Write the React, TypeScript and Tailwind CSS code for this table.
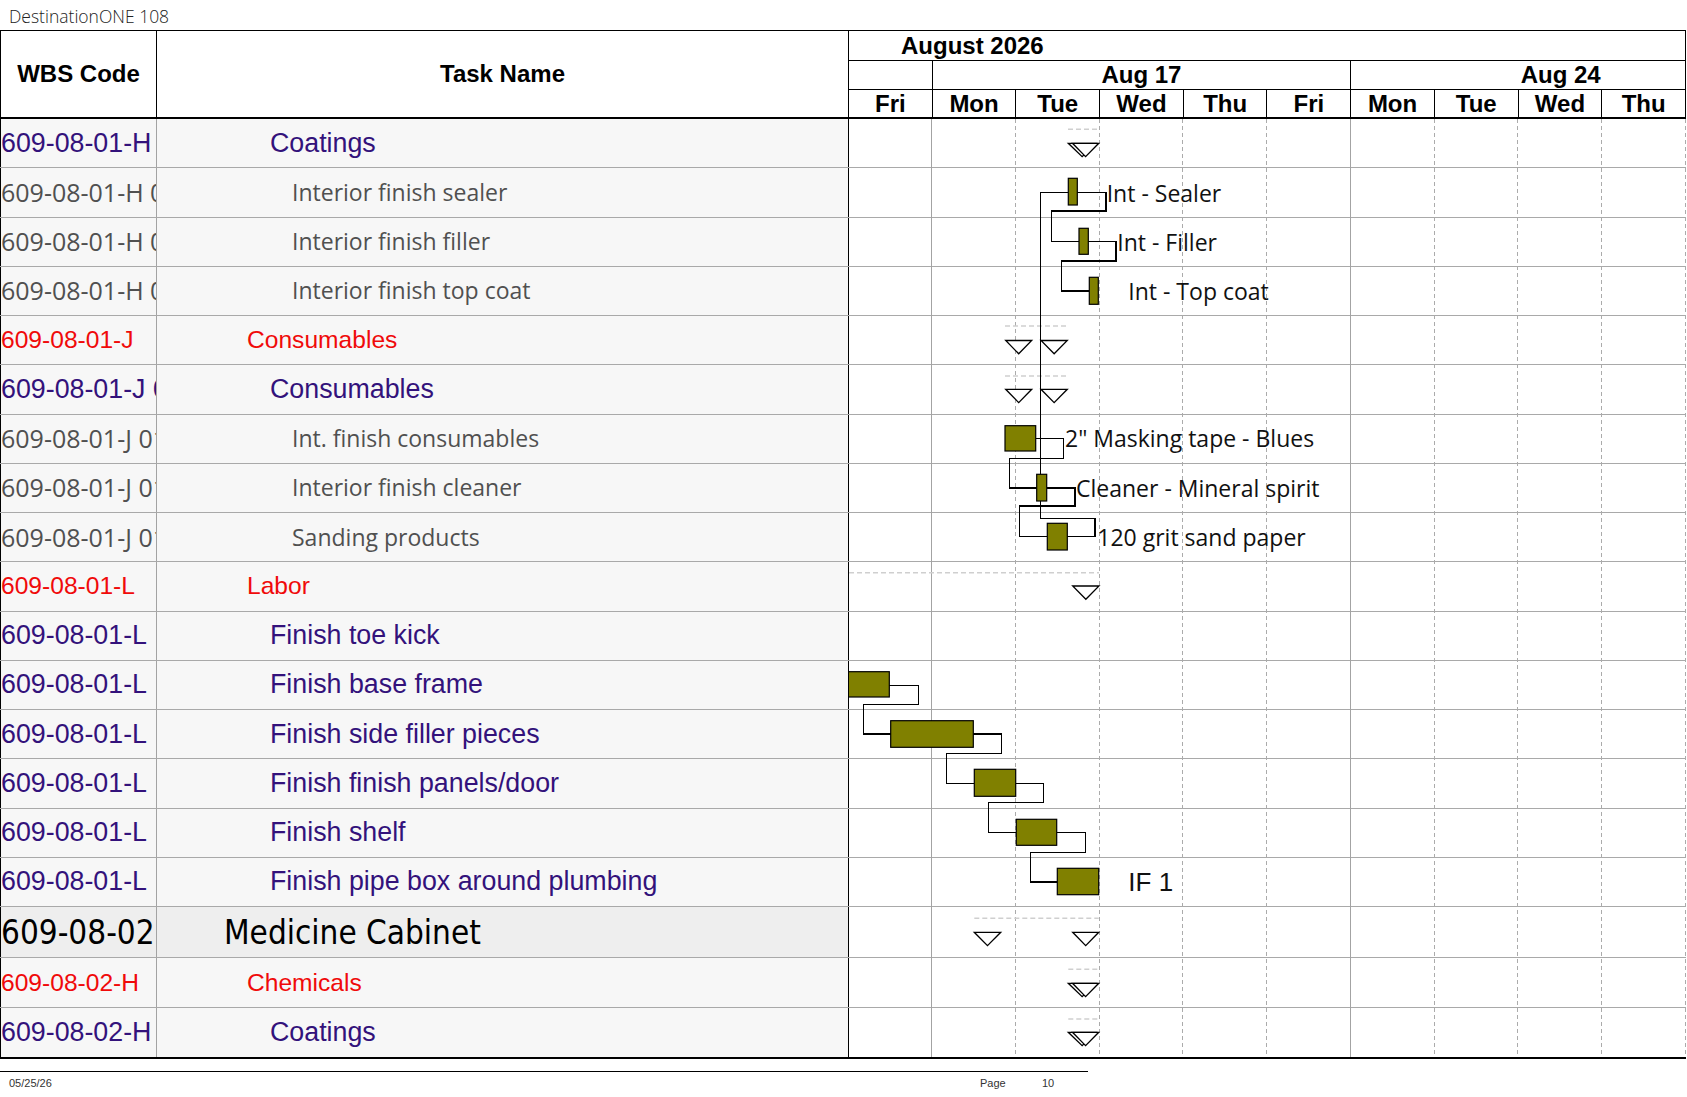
import React from 'react';

type Kind = 'purple' | 'red' | 'grey' | 'top';

interface Row {
  wbs: string;
  name: string;
  kind: Kind;
  h: string;
}

const arial = "font-['Liberation_Sans',Arial,sans-serif]";

const wbsStyle: Record<Kind, string> = {
  purple: "font-['Liberation_Sans',Arial,sans-serif] text-[26.8px] text-[#33127b]",
  red: "font-['Liberation_Sans',Arial,sans-serif] text-[24.6px] text-[#f00a0a]",
  grey: "font-['Open_Sans',sans-serif] text-[25px] text-[#505050]",
  top: "font-['DejaVu_Sans_Condensed','Liberation_Sans',sans-serif] text-[33px] text-black",
};

const nameStyle: Record<Kind, string> = {
  purple: "font-['Liberation_Sans',Arial,sans-serif] text-[26.8px] text-[#33127b] pl-[113px]",
  red: "font-['Liberation_Sans',Arial,sans-serif] text-[24.6px] text-[#f00a0a] pl-[90px]",
  grey: "font-['Open_Sans',sans-serif] text-[23px] text-[#505050] pl-[135px]",
  top: "font-['DejaVu_Sans_Condensed','Liberation_Sans',sans-serif] text-[33px] text-black pl-[67px]",
};

const rows: Row[] = [
  { wbs: '609-08-01-H', name: 'Coatings', kind: 'purple', h: 'h-[49.25px]' },
  { wbs: '609-08-01-H 01', name: 'Interior finish sealer', kind: 'grey', h: 'h-[49.25px]' },
  { wbs: '609-08-01-H 02', name: 'Interior finish filler', kind: 'grey', h: 'h-[49.25px]' },
  { wbs: '609-08-01-H 03', name: 'Interior finish top coat', kind: 'grey', h: 'h-[49.25px]' },
  { wbs: '609-08-01-J', name: 'Consumables', kind: 'red', h: 'h-[49.25px]' },
  { wbs: '609-08-01-J 01', name: 'Consumables', kind: 'purple', h: 'h-[49.25px]' },
  { wbs: '609-08-01-J 01.01', name: 'Int. finish consumables', kind: 'grey', h: 'h-[49.25px]' },
  { wbs: '609-08-01-J 01.02', name: 'Interior finish cleaner', kind: 'grey', h: 'h-[49.25px]' },
  { wbs: '609-08-01-J 01.03', name: 'Sanding products', kind: 'grey', h: 'h-[49.25px]' },
  { wbs: '609-08-01-L', name: 'Labor', kind: 'red', h: 'h-[49.25px]' },
  { wbs: '609-08-01-L', name: 'Finish toe kick', kind: 'purple', h: 'h-[49.25px]' },
  { wbs: '609-08-01-L', name: 'Finish base frame', kind: 'purple', h: 'h-[49.25px]' },
  { wbs: '609-08-01-L', name: 'Finish side filler pieces', kind: 'purple', h: 'h-[49.25px]' },
  { wbs: '609-08-01-L', name: 'Finish finish panels/door', kind: 'purple', h: 'h-[49.25px]' },
  { wbs: '609-08-01-L', name: 'Finish shelf', kind: 'purple', h: 'h-[49.25px]' },
  { wbs: '609-08-01-L', name: 'Finish pipe box around plumbing', kind: 'purple', h: 'h-[49.25px]' },
  { wbs: '609-08-02', name: 'Medicine Cabinet', kind: 'top', h: 'h-[51.4px]' },
  { wbs: '609-08-02-H', name: 'Chemicals', kind: 'red', h: 'h-[50px]' },
  { wbs: '609-08-02-H', name: 'Coatings', kind: 'purple', h: 'h-[48.6px]' },
];

const days = ['Fri', 'Mon', 'Tue', 'Wed', 'Thu', 'Fri', 'Mon', 'Tue', 'Wed', 'Thu'];
const DAY = 83.74;

// bars in page coordinates
const bars = [
  [1068.3, 1077.3, 178.3, 205],
  [1079, 1088.3, 228.3, 254.3],
  [1089.3, 1098.3, 277.3, 304.3],
  [1005, 1035.7, 425.7, 451],
  [1036.7, 1046.7, 474.3, 501],
  [1047.3, 1067.3, 523.3, 550],
  [848.3, 889.3, 671.7, 697],
  [890.7, 973.3, 720.7, 747.3],
  [974.3, 1015.7, 769.3, 796.3],
  [1016.3, 1056.7, 819.3, 845.3],
  [1057.3, 1098.7, 868.3, 894.7],
];

const links: number[][] = [
  [1077.3, 192.3, 1106, 192.3, 1106, 211, 1051.3, 211, 1051.3, 241.5, 1079, 241.5],
  [1088.3, 241.5, 1116, 241.5, 1116, 261, 1061.7, 261, 1061.7, 291, 1089.3, 291],
  [1035.7, 438.3, 1063.3, 438.3, 1063.3, 458.3, 1009.3, 458.3, 1009.3, 488, 1036.7, 488],
  [1046.7, 488, 1075, 488, 1075, 506, 1019.3, 506, 1019.3, 536.7, 1047.3, 536.7],
  [1067.3, 536.7, 1095, 536.7, 1095, 518.3, 1040.5, 518.3, 1040.5, 192.3, 1068.3, 192.3],
  [889.3, 685.3, 918.3, 685.3, 918.3, 704.3, 863.3, 704.3, 863.3, 734, 890.7, 734],
  [973.3, 734, 1001.3, 734, 1001.3, 753.3, 946.7, 753.3, 946.7, 783.3, 974.3, 783.3],
  [1015.7, 783.3, 1043.7, 783.3, 1043.7, 802.3, 988.3, 802.3, 988.3, 832.3, 1016.3, 832.3],
  [1056.7, 832.3, 1085.7, 832.3, 1085.7, 852.3, 1030.3, 852.3, 1030.3, 882, 1057.3, 882],
];

// summary rows: dashed line + triangles (left, right, top)
const summaries: { dash: [number, number, number]; tris: [number, number, number][] }[] = [
  { dash: [1068, 1099, 129.3], tris: [[1068.3, 1096, 143.3], [1072.5, 1098.7, 143.3]] },
  { dash: [1005, 1068, 326], tris: [[1005.7, 1031.7, 340.5], [1041, 1067.3, 340.5]] },
  { dash: [1005, 1068, 376], tris: [[1005.7, 1031.7, 389.3], [1041, 1067.3, 389.3]] },
  { dash: [849, 1099, 572.7], tris: [[1072.7, 1099, 586]] },
  { dash: [974.3, 1098.7, 918.3], tris: [[974.3, 1000.7, 932.3], [1072.7, 1098.7, 932.3]] },
  { dash: [1068.3, 1098.7, 969.3], tris: [[1068.3, 1096, 983.3], [1072.5, 1098.7, 983.3]] },
  { dash: [1068.3, 1098.7, 1019], tris: [[1068.3, 1096, 1032.3], [1072.5, 1098.7, 1032.3]] },
];

const labels = [
  { x: 1106.7, y: 202.3, text: 'Int - Sealer' },
  { x: 1117.3, y: 251.2, text: 'Int - Filler' },
  { x: 1128.3, y: 300.3, text: 'Int - Top coat' },
  { x: 1065, y: 447.3, text: '2" Masking tape - Blues' },
  { x: 1076, y: 496.7, text: 'Cleaner - Mineral spirit' },
  { x: 1097.3, y: 545.7, text: '120 grit sand paper' },
];

const triPoints = (l: number, r: number, t: number) =>
  `${l},${t} ${r},${t} ${(l + r) / 2},${t + 13.3}`;

const GanttDrawing: React.FC = () => (
  <svg
    className="absolute left-[849px] top-0 pointer-events-none"
    width={837}
    height={938}
    viewBox="849 119 837 938"
  >
    {Array.from({ length: 10 }, (_, i) => {
      const x = 848 + DAY * (i + 1);
      const solid = i === 0 || i === 5;
      return (
        <line
          key={i}
          x1={x}
          x2={x}
          y1={119}
          y2={1057}
          stroke={solid ? '#a3a3a3' : '#ababab'}
          strokeWidth={1}
          strokeDasharray={solid ? undefined : '4 3'}
          shapeRendering="crispEdges"
        />
      );
    })}

    {summaries.map((s, i) => (
      <g key={i}>
        <line
          x1={s.dash[0]}
          x2={s.dash[1]}
          y1={s.dash[2]}
          y2={s.dash[2]}
          stroke="#cfcfcf"
          strokeWidth={1.6}
          strokeDasharray="5 3"
        />
        {s.tris.map((t, j) => (
          <polygon key={j} points={triPoints(t[0], t[1], t[2])} fill="white" stroke="#000" strokeWidth={1.3} />
        ))}
      </g>
    ))}

    {links.map((p, i) => (
      <polyline
        key={i}
        points={p.join(' ')}
        fill="none"
        stroke="#000"
        strokeWidth={1.2}
        shapeRendering="crispEdges"
      />
    ))}

    {bars.map(([x1, x2, y1, y2], i) => (
      <rect
        key={i}
        x={x1}
        y={y1}
        width={x2 - x1}
        height={y2 - y1}
        fill="#808000"
        stroke="#000"
        strokeWidth={1.2}
      />
    ))}

    {labels.map((l) => (
      <text key={l.text} x={l.x} y={l.y} fontFamily="Open Sans, sans-serif" fontSize={23} fill="#111">
        {l.text}
      </text>
    ))}
    <text x={1128.3} y={891} fontFamily="Liberation Sans, Arial, sans-serif" fontSize={26} fill="#111">
      IF 1
    </text>
  </svg>
);

export default function App() {
  return (
    <div className="w-[1687px] bg-white text-black">
      {/* Title */}
      <div className="h-[30px] flex items-center pl-[9px] pt-[2px] font-['Open_Sans',sans-serif] font-light text-[17.5px] text-[#222]">
        DestinationONE 108
      </div>

      {/* Header */}
      <div className={`w-[1686px] h-[89px] flex border-t border-b-2 border-black ${arial} font-bold text-[24px] leading-none`}>
        <div className="w-[157px] shrink-0 border-l border-r border-black flex items-center justify-center">
          WBS Code
        </div>
        <div className="w-[692px] shrink-0 border-r border-black flex items-center justify-center">
          Task Name
        </div>
        <div className="flex-1 flex flex-col">
          <div className="h-[30px] border-b border-r border-black flex items-center pl-[52px]">
            August 2026
          </div>
          <div className="h-[29px] border-b border-black grid grid-cols-10">
            <div className="col-span-1 border-r border-black" />
            <div className="col-span-5 border-r border-black flex items-center justify-center">Aug 17</div>
            <div className="col-span-4 border-r border-black overflow-hidden flex items-center">
              <div className="w-[419px] shrink-0 text-center">Aug 24</div>
            </div>
          </div>
          <div className="flex-1 grid grid-cols-10">
            {days.map((d, i) => (
              <div key={i} className="border-r border-black flex items-center justify-center">
                {d}
              </div>
            ))}
          </div>
        </div>
      </div>

      {/* Body */}
      <div className="relative w-[1686px] border-b-2 border-black">
        {rows.map((r, i) => {
          const last = i === rows.length - 1;
          const bg = r.kind === 'top' ? 'bg-[#eeeeee]' : 'bg-[#f7f7f7]';
          return (
            <div key={i} className={`flex ${r.h} ${last ? '' : 'border-b border-[#a9a9a9]'}`}>
              <div
                className={`w-[157px] shrink-0 border-l border-l-black border-r border-r-[#a3a3a3] ${bg} flex items-center overflow-hidden whitespace-nowrap leading-none ${wbsStyle[r.kind]}`}
              >
                {r.wbs}
              </div>
              <div
                className={`w-[692px] shrink-0 border-r border-black ${bg} flex items-center whitespace-nowrap leading-none ${nameStyle[r.kind]}`}
              >
                {r.name}
              </div>
              <div className="flex-1 bg-white" />
            </div>
          );
        })}
        <GanttDrawing />
      </div>

      {/* Footer */}
      <div className="mt-[12px] w-[1088px] border-t border-black">
        <div className={`flex pt-[6px] text-[11px] leading-none text-[#333] ${arial}`}>
          <span className="w-[980px] pl-[9px]">05/25/26</span>
          <span className="w-[62px]">Page</span>
          <span>10</span>
        </div>
      </div>
    </div>
  );
}
